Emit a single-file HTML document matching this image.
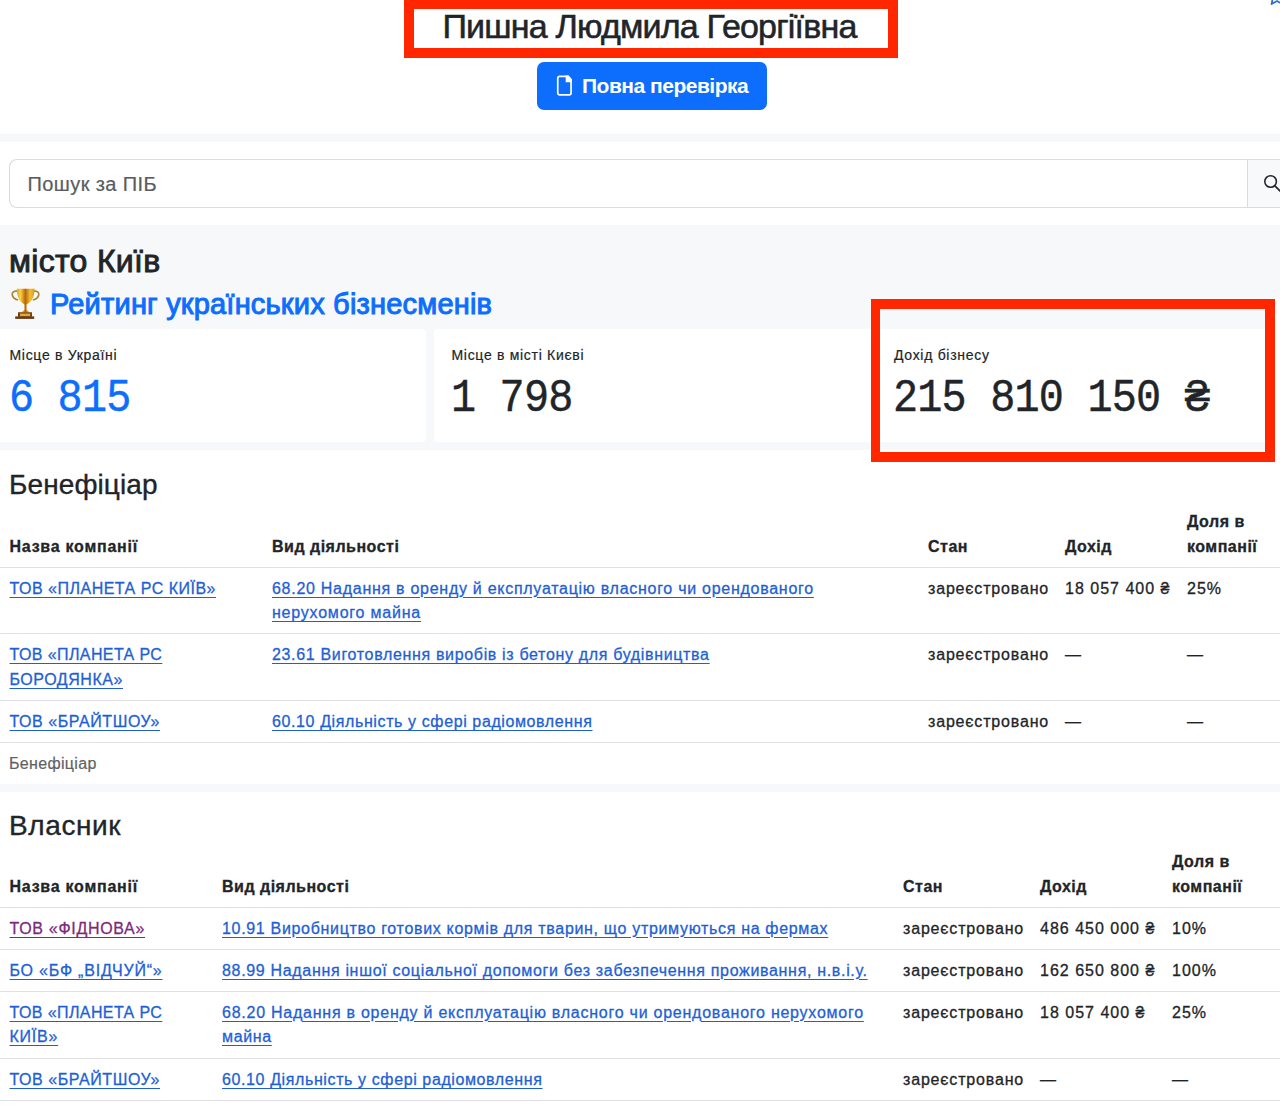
<!DOCTYPE html>
<html lang="uk">
<head>
<meta charset="utf-8">
<title>Пишна Людмила Георгіївна</title>
<style>
html,body{margin:0;padding:0;}
body{width:1280px;height:1106px;overflow:hidden;position:relative;background:#fff;color:#212529;font-family:"Liberation Sans",sans-serif;font-size:16px;}
.abs{position:absolute;}
.gray{background:#f7f8f9;}
.title{left:-2px;top:6px;width:1303px;text-align:center;font-size:34px;line-height:40px;letter-spacing:-0.8px;-webkit-text-stroke:0.55px #212529;white-space:nowrap;}
.redbox{border:10px solid #ff2600;box-sizing:border-box;}
.btn{left:537px;top:62px;width:230px;height:48px;border-radius:7px;background:#0d6efd;color:#fff;box-sizing:border-box;}
.btn .txt{position:absolute;left:45px;top:9px;font-size:21px;line-height:30px;font-weight:700;letter-spacing:-0.5px;white-space:nowrap;}
.btn svg{position:absolute;left:19px;top:13px;}
.search{left:9px;top:159px;width:1239px;height:49px;border:1px solid #d9dbdd;border-right:none;border-radius:8px 0 0 8px;box-sizing:border-box;background:#fff;}
.search .ph{position:absolute;left:17.5px;top:9px;font-size:20px;line-height:30px;color:#595c5f;letter-spacing:0.4px;-webkit-text-stroke:0.2px #595c5f;white-space:nowrap;}
.sbtn{left:1247px;top:159px;width:60px;height:49px;border:1px solid #d9dbdd;box-sizing:border-box;background:#f8f9fa;}
.h2{font-size:32px;line-height:38px;font-weight:400;-webkit-text-stroke:0.9px #212529;letter-spacing:0.3px;white-space:nowrap;}
.h3link{font-size:29px;line-height:34px;font-weight:400;-webkit-text-stroke:1px #0d6efd;letter-spacing:0.1px;color:#0d6efd;white-space:nowrap;}
.card{background:#fff;top:329px;height:113px;border-radius:4px;}
.card .lbl{position:absolute;font-size:14px;line-height:21px;letter-spacing:0.7px;-webkit-text-stroke:0.2px #212529;white-space:nowrap;}
.card .num{position:absolute;font-family:"Liberation Mono",monospace;font-size:45px;line-height:48px;letter-spacing:-0.87px;-webkit-text-stroke:0.45px currentColor;white-space:nowrap;transform:scale(0.93,1.04);transform-origin:0 36px;}
.h3{font-size:28px;line-height:34px;-webkit-text-stroke:0.35px #212529;white-space:nowrap;}
table{border-collapse:collapse;table-layout:fixed;position:absolute;}
th,td{-webkit-text-stroke:0.3px currentColor;padding:9.2px 8px 7.2px;line-height:24.6px;text-align:left;vertical-align:top;border-bottom:1px solid #dfe0e2;letter-spacing:0.6px;white-space:nowrap;}
td:first-child,th:first-child{padding-left:9.5px;}
tr.tall td{padding-bottom:7.9px;}
td:nth-child(1){letter-spacing:0.43px;}td:nth-child(2){letter-spacing:0.72px;}td:nth-child(3){letter-spacing:0.83px;}td:nth-child(4){letter-spacing:1px;}td:nth-child(5){letter-spacing:1px;}
th{font-weight:700;vertical-align:bottom;letter-spacing:0.5px;}
th:first-child{letter-spacing:0.75px;}
a{color:#1e5fd6;text-decoration:underline;text-underline-offset:2.6px;}
a.v{color:#7d2a7a;}
.cap{font-size:16px;line-height:24px;color:#5f6265;letter-spacing:0.33px;-webkit-text-stroke:0.2px #5f6265;white-space:nowrap;}
</style>
</head>
<body>
<!-- header -->
<div class="abs title">Пишна Людмила Георгіївна</div>
<div class="abs btn">
  <svg width="17" height="22" viewBox="0 0 17 22"><path d="M3.6 1.35H12.2L15.05 4.5V18a1.85 1.85 0 0 1-1.85 1.85H3.6A1.85 1.85 0 0 1 1.75 18V3.2A1.85 1.85 0 0 1 3.6 1.35z" fill="none" stroke="#fff" stroke-width="1.7"/><path d="M9.7 .6H12.4L15.9 4.4V7.2H9.7z" fill="#fff"/></svg>
  <span class="txt">Повна перевірка</span>
</div>
<div class="abs gray" style="left:0;top:134px;width:1280px;height:8px;"></div>

<!-- search -->
<div class="abs search"><span class="ph">Пошук за ПІБ</span></div>
<div class="abs sbtn">
  <svg style="position:absolute;left:14.7px;top:13.5px" width="20" height="20" viewBox="0 0 20 20"><circle cx="7.6" cy="7.5" r="5.8" fill="none" stroke="#212529" stroke-width="1.55"/><path d="M11.9 11.9l5.6 5.6" stroke="#212529" stroke-width="1.7" stroke-linecap="round"/></svg>
</div>

<!-- city section -->
<div class="abs gray" style="left:0;top:225px;width:1280px;height:104px;"></div>
<div class="abs h2" style="left:9px;top:242px;">місто Київ</div>
<div class="abs" style="left:11px;top:288px;width:29px;height:31px;">
  <svg width="29" height="31" viewBox="0 0 29 31">
    <defs>
      <linearGradient id="g1" x1="0" x2="1" y1="0" y2="0"><stop offset="0" stop-color="#e0a825"/><stop offset=".22" stop-color="#f7cf45"/><stop offset=".48" stop-color="#b8650c"/><stop offset=".75" stop-color="#f2c02e"/><stop offset="1" stop-color="#d89a1a"/></linearGradient>
      <linearGradient id="g2" x1="0" x2="0" y1="0" y2="1"><stop offset="0" stop-color="#8a4a12"/><stop offset="1" stop-color="#5e300c"/></linearGradient>
    </defs>
    <path d="M6.2 3.2C3 2.6 0.8 4.4 1.3 7c.5 2.6 3 4.3 5.8 5" fill="none" stroke="#a48a34" stroke-width="1.7"/>
    <path d="M22.8 3.2c3.2-.6 5.4 1.2 4.9 3.8-.5 2.6-3 4.3-5.8 5" fill="none" stroke="#a48a34" stroke-width="1.7"/>
    <path d="M5.8 .8h17.8c0 6.5-2 12.6-7.4 15.2l-.6.6v5.4l3.2 2.4H10.2l3.2-2.4v-5.4l-.6-.6C7.8 13.4 5.8 7.3 5.8.8z" fill="url(#g1)"/>
    <rect x="7" y="24.2" width="14" height="4.6" fill="url(#g2)"/>
    <rect x="9" y="25.6" width="10.2" height="2.6" fill="#e6a838"/>
    <rect x="4.2" y="28.4" width="19" height="2.5" fill="#6a3a10"/>
  </svg>
</div>
<div class="abs h3link" style="left:50px;top:287px;letter-spacing:0.2px;">Рейтинг українських бізнесменів</div>

<!-- cards -->
<div class="abs gray" style="left:0;top:328px;width:1280px;height:122px;"></div>
<div class="abs card" style="left:-9px;width:435px;">
  <span class="lbl" style="left:18.5px;top:16px;">Місце в Україні</span>
  <span class="num" style="left:17.5px;top:46.6px;color:#0d6efd;">6 815</span>
</div>
<div class="abs card" style="left:434px;width:438px;">
  <span class="lbl" style="left:17.5px;top:16px;">Місце в місті Києві</span>
  <span class="num" style="left:16.5px;top:46.6px;">1 798</span>
</div>
<div class="abs card" style="left:877px;width:435px;">
  <span class="lbl" style="left:17px;top:16px;">Дохід бізнесу</span>
  <span class="num" style="left:15.5px;top:46.6px;">215 810 150 ₴</span>
</div>

<!-- beneficiary -->
<div class="abs h3" style="left:9px;top:468px;letter-spacing:0.1px;">Бенефіціар</div>
<table style="left:0px;top:501px;width:1300px;">
  <colgroup><col style="width:264px"><col style="width:656px"><col style="width:137px"><col style="width:122px"><col style="width:123px"></colgroup>
  <tr><th>Назва компанії</th><th>Вид діяльності</th><th>Стан</th><th>Дохід</th><th>Доля в<br>компанії</th></tr>
  <tr><td><a style="letter-spacing:0.495px">ТОВ «ПЛАНЕТА РС КИЇВ»</a></td><td><a><span style="letter-spacing:0.723px">68.20 Надання в оренду й експлуатацію власного чи орендованого</span><br><span style="letter-spacing:0.783px">нерухомого майна</span></a></td><td>зареєстровано</td><td>18 057 400 ₴</td><td>25%</td></tr>
  <tr><td><a><span style="letter-spacing:0.4px">ТОВ «ПЛАНЕТА РС</span><br><span style="letter-spacing:0.548px">БОРОДЯНКА»</span></a></td><td><a style="letter-spacing:0.663px">23.61 Виготовлення виробів із бетону для будівництва</a></td><td>зареєстровано</td><td>—</td><td>—</td></tr>
  <tr><td><a style="letter-spacing:0.559px">ТОВ «БРАЙТШОУ»</a></td><td><a style="letter-spacing:0.61px">60.10 Діяльність у сфері радіомовлення</a></td><td>зареєстровано</td><td>—</td><td>—</td></tr>
</table>
<div class="abs cap" style="left:9px;top:752px;">Бенефіціар</div>
<div class="abs gray" style="left:0;top:784px;width:1280px;height:8px;"></div>

<!-- owner -->
<div class="abs h3" style="left:9px;top:809px;letter-spacing:0.6px;">Власник</div>
<table style="left:0px;top:841px;width:1300px;">
  <colgroup><col style="width:214px"><col style="width:681px"><col style="width:137px"><col style="width:132px"><col style="width:138px"></colgroup>
  <tr><th>Назва компанії</th><th>Вид діяльності</th><th>Стан</th><th>Дохід</th><th>Доля в<br>компанії</th></tr>
  <tr><td><a class="v" style="letter-spacing:0.679px">ТОВ «ФІДНОВА»</a></td><td><a style="letter-spacing:0.679px">10.91 Виробництво готових кормів для тварин, що утримуються на фермах</a></td><td>зареєстровано</td><td>486 450 000 ₴</td><td>10%</td></tr>
  <tr><td><a style="letter-spacing:0.792px">БО «БФ „ВІДЧУЙ“»</a></td><td><a style="letter-spacing:0.674px">88.99 Надання іншої соціальної допомоги без забезпечення проживання, н.в.і.у.</a></td><td>зареєстровано</td><td>162 650 800 ₴</td><td>100%</td></tr>
  <tr class="tall"><td><a><span style="letter-spacing:0.4px">ТОВ «ПЛАНЕТА РС</span><br><span style="letter-spacing:0.771px">КИЇВ»</span></a></td><td><a><span style="letter-spacing:0.753px">68.20 Надання в оренду й експлуатацію власного чи орендованого нерухомого</span><br><span style="letter-spacing:0.644px">майна</span></a></td><td>зареєстровано</td><td>18 057 400 ₴</td><td>25%</td></tr>
  <tr><td><a style="letter-spacing:0.559px">ТОВ «БРАЙТШОУ»</a></td><td><a style="letter-spacing:0.61px">60.10 Діяльність у сфері радіомовлення</a></td><td>зареєстровано</td><td>—</td><td>—</td></tr>
</table>

<svg class="abs" style="left:1265.5px;top:-14px" width="22" height="20" viewBox="0 0 22 20"><path d="M11 1.5l2.6 5.6 6.1.7-4.5 4.2 1.2 6-5.4-3-5.4 3 1.2-6-4.5-4.2 6.1-.7z" fill="none" stroke="#2f6fd6" stroke-width="1.8" stroke-linejoin="round"/></svg>
<!-- annotation boxes -->
<div class="abs redbox" style="left:404px;top:-1px;width:494px;height:59px;"></div>
<div class="abs redbox" style="left:871px;top:299px;width:404px;height:163px;border-left-width:9px;"></div>
<div class="abs" style="left:1275px;top:299px;width:5px;height:163px;background:#fff;"></div>
</body>
</html>
